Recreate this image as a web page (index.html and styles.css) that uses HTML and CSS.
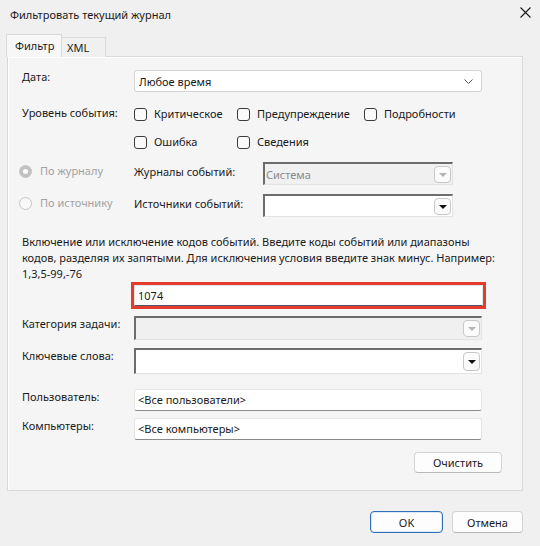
FILE: index.html
```html
<!DOCTYPE html>
<html lang="ru">
<head>
    <meta charset="UTF-8">
    <title>Фильтровать текущий журнал</title>
    <link rel="stylesheet" href="styles.css">
</head>
<body>
    <div class="window">
        <!-- Title bar -->
        <div class="titlebar">
            <span class="title">Фильтровать текущий журнал</span>
            <svg class="close" width="11" height="11" viewBox="0 0 11 11">
                <path d="M0.5 0.5 L10.5 10.5 M10.5 0.5 L0.5 10.5" stroke="#1a1a1a" stroke-width="1.1" fill="none"/>
            </svg>
        </div>

        <!-- Tabs -->
        <div class="tabs">
            <div class="tab active">Фильтр</div>
            <div class="tab">XML</div>
        </div>

        <!-- Filter page -->
        <div class="panel">
            <div class="row row-date">
                <div class="label">Дата:</div>
                <div class="select">
                    <span>Любое время</span>
                    <svg width="9" height="5" viewBox="0 0 9 5"><path d="M0.5 0.5 L4.5 4.5 L8.5 0.5" stroke="#555" fill="none"/></svg>
                </div>
            </div>

            <div class="row row-level1">
                <div class="label label-up">Уровень события:</div>
                <div class="checks">
                    <label class="check"><span class="box"></span>Критическое</label>
                    <label class="check"><span class="box"></span>Предупреждение</label>
                    <label class="check"><span class="box"></span>Подробности</label>
                </div>
            </div>

            <div class="row row-level2">
                <div class="label"></div>
                <div class="checks">
                    <label class="check"><span class="box"></span>Ошибка</label>
                    <label class="check"><span class="box"></span>Сведения</label>
                </div>
            </div>

            <div class="row row-logs">
                <div class="label radio-cell"><span class="radio checked"></span>По журналу</div>
                <div class="sublabel">Журналы событий:</div>
                <div class="combo disabled short">
                    <span>Система</span>
                    <span class="drop"><span class="tri"></span></span>
                </div>
            </div>

            <div class="row row-sources">
                <div class="label radio-cell"><span class="radio"></span>По источнику</div>
                <div class="sublabel">Источники событий:</div>
                <div class="combo short">
                    <span></span>
                    <span class="drop"><span class="tri"></span></span>
                </div>
            </div>

            <p class="hint">Включение или исключение кодов событий. Введите коды событий или диапазоны<br>кодов, разделяя их запятыми. Для исключения условия введите знак минус. Например:<br>1,3,5-99,-76</p>

            <div class="row row-ids">
                <div class="label"></div>
                <div class="textbox marked">1074</div>
            </div>

            <div class="row row-category">
                <div class="label">Категория задачи:</div>
                <div class="combo disabled wide">
                    <span></span>
                    <span class="drop"><span class="tri"></span></span>
                </div>
            </div>

            <div class="row row-keywords">
                <div class="label">Ключевые слова:</div>
                <div class="combo wide tall">
                    <span></span>
                    <span class="drop"><span class="tri"></span></span>
                </div>
            </div>

            <div class="row row-user">
                <div class="label">Пользователь:</div>
                <div class="textbox">&lt;Все пользователи&gt;</div>
            </div>

            <div class="row row-computer">
                <div class="label">Компьютеры:</div>
                <div class="textbox">&lt;Все компьютеры&gt;</div>
            </div>

            <div class="clear-row">
                <button type="button" class="btn btn-clear">Очистить</button>
            </div>
        </div>

        <!-- Dialog buttons -->
        <div class="footer">
            <button type="button" class="btn btn-ok">OK</button>
            <button type="button" class="btn btn-cancel">Отмена</button>
        </div>
    </div>
</body>
</html>
```

FILE: styles.css
```css
/* General */
body {
    margin: 0;
    padding: 0;
    background-color: #f0f0f0;
    font-family: "Noto Sans", "Open Sans", sans-serif;
    font-size: 11px;
    color: #1a1a1a;
}

.window {
    width: 540px;
    height: 546px;
    display: flex;
    flex-direction: column;
}

/* Title bar */
.titlebar {
    height: 34px;
    display: flex;
    justify-content: space-between;
    align-items: flex-start;
    padding: 0 9px 0 10px;
    box-sizing: border-box;
}
.titlebar .title {
    margin-top: 6px;
    line-height: 18px;
}
.titlebar .close {
    margin-top: 7px;
}

/* Tabs */
.tabs {
    display: flex;
    align-items: flex-end;
    padding-left: 6px;
    height: 23px;
    position: relative;
    z-index: 1;
}
.tab {
    height: 20px;
    line-height: 20px;
    padding: 0 5px;
    width: 44px;
    box-sizing: border-box;
    border: 1px solid #dadada;
    border-bottom: none;
    border-left: none;
    background: #f0f0f0;
}
.tab.active {
    width: 56px;
    height: 23px;
    line-height: 22px;
    padding-left: 8px;
    border-left: 1px solid #dadada;
    background: #f7f7f7;
}

/* Page */
.panel {
    margin: -1px 17px 0 7px;
    border: 1px solid #d9d9d9;
    background: #f5f5f5;
    padding: 13px 20px 17px 14px;
    box-shadow: inset 1px 1px 0 #ffffff;
}

.row {
    display: flex;
    align-items: flex-start;
}
.label {
    width: 112px;
    flex: none;
    line-height: 16px;
}
.label-up {
    margin-top: -2px;
}

.row-date { height: 22px; }
.row-date .label { margin-top: -1px; }
.row-level1 { margin-top: 12px; height: 20px; align-items: center; }
.row-level2 { margin-top: 8px; height: 20px; align-items: center; }
.row-logs { margin-top: 10px; }
.row-sources { margin-top: 9px; }
.row-ids { margin-top: 0; }
.row-category { margin-top: 10px; }
.row-keywords { margin-top: 8px; }
.row-user { margin-top: 15px; }
.row-computer { margin-top: 7px; }

/* Modern combobox */
.select {
    width: 348px;
    height: 22px;
    box-sizing: border-box;
    border: 1px solid #d3d3d3;
    border-radius: 3px;
    background: #ffffff;
    display: flex;
    justify-content: space-between;
    align-items: center;
    padding: 0 8px 0 4px;
}

/* Checkboxes */
.checks {
    display: grid;
    grid-template-columns: 103px 127px auto;
}
.check {
    display: flex;
    align-items: center;
    line-height: 16px;
}
.check .box {
    width: 11px;
    height: 11px;
    border: 1px solid #3c3c3c;
    border-radius: 3px;
    background: #fafafa;
    margin-right: 7px;
}

/* Radio buttons */
.radio-cell {
    display: flex;
    align-items: center;
    margin-left: -3px;
    margin-right: 3px;
    color: #a2a2a2;
    margin-top: 1px;
}
.radio {
    width: 11px;
    height: 11px;
    border: 1px solid #c4c4c4;
    border-radius: 50%;
    background: #f8f8f8;
    margin-right: 8px;
    position: relative;
}
.radio.checked {
    background: #c2c2c2;
}
.radio.checked::after {
    content: "";
    position: absolute;
    left: 3px;
    top: 3px;
    width: 5px;
    height: 5px;
    border-radius: 50%;
    background: #ffffff;
}
.sublabel {
    width: 129px;
    flex: none;
    line-height: 16px;
    margin-top: 2px;
}

/* Classic combobox */
.combo {
    height: 23px;
    box-sizing: border-box;
    border: 1px solid #e3e3e3;
    border-top: 2px solid #6c6c6c;
    border-left: 2px solid #6c6c6c;
    background: #ffffff;
    display: flex;
    justify-content: space-between;
    align-items: center;
    padding: 0 1px 0 1px;
}
.combo.short { width: 190px; }
.combo.wide { width: 348px; height: 24px; }
.combo.tall { height: 26px; }
.combo.disabled {
    background: #f0f0f0;
    color: #8a8a8a;
}
.drop {
    width: 17px;
    height: 17px;
    box-sizing: border-box;
    border: 1px solid #c8c8c8;
    border-radius: 4px;
    background: #fbfbfb;
    display: flex;
    align-items: center;
    justify-content: center;
}
.combo.tall .drop { height: 19px; }
.tri {
    width: 0;
    height: 0;
    border-left: 4px solid transparent;
    border-right: 4px solid transparent;
    border-top: 4px solid #111111;
    margin-top: 1px;
}
.combo.disabled .tri {
    border-top-color: #b5b5b5;
}

/* Hint text */
.hint {
    margin: 17px 0 0;
    line-height: 16px;
    white-space: nowrap;
}

/* Text boxes */
.textbox {
    width: 348px;
    height: 22px;
    box-sizing: border-box;
    border: 1px solid #e6e6e6;
    border-bottom: 1px solid #8a8a8a;
    border-radius: 3px;
    background: #ffffff;
    line-height: 20px;
    padding-left: 3px;
}
.textbox.marked {
    width: 349px;
    height: 21px;
    outline: 3px solid #e53b2c;
    margin-top: 3px;
    border-radius: 0;
    border-bottom-color: #58506a;
}

/* Buttons */
.btn {
    font-family: "Noto Sans", "Open Sans", sans-serif;
    font-size: 11px;
    color: #1a1a1a;
    height: 21px;
    padding: 0;
    background: #fdfdfd;
    border: 1px solid #d3d3d3;
    border-bottom-color: #b8b8b8;
    border-radius: 4px;
    cursor: pointer;
}
.clear-row {
    display: flex;
    justify-content: flex-end;
    margin-top: 12px;
}
.btn-clear {
    width: 88px;
}

.footer {
    display: flex;
    justify-content: flex-end;
    gap: 9px;
    padding-right: 17px;
    margin-top: 20px;
}
.btn-ok {
    width: 73px;
    height: 22px;
    border: 1px solid #2f6fb7;
    box-shadow: inset 0 0 0 1px #dce8f5;
}
.btn-cancel {
    width: 71px;
    height: 22px;
}
```
